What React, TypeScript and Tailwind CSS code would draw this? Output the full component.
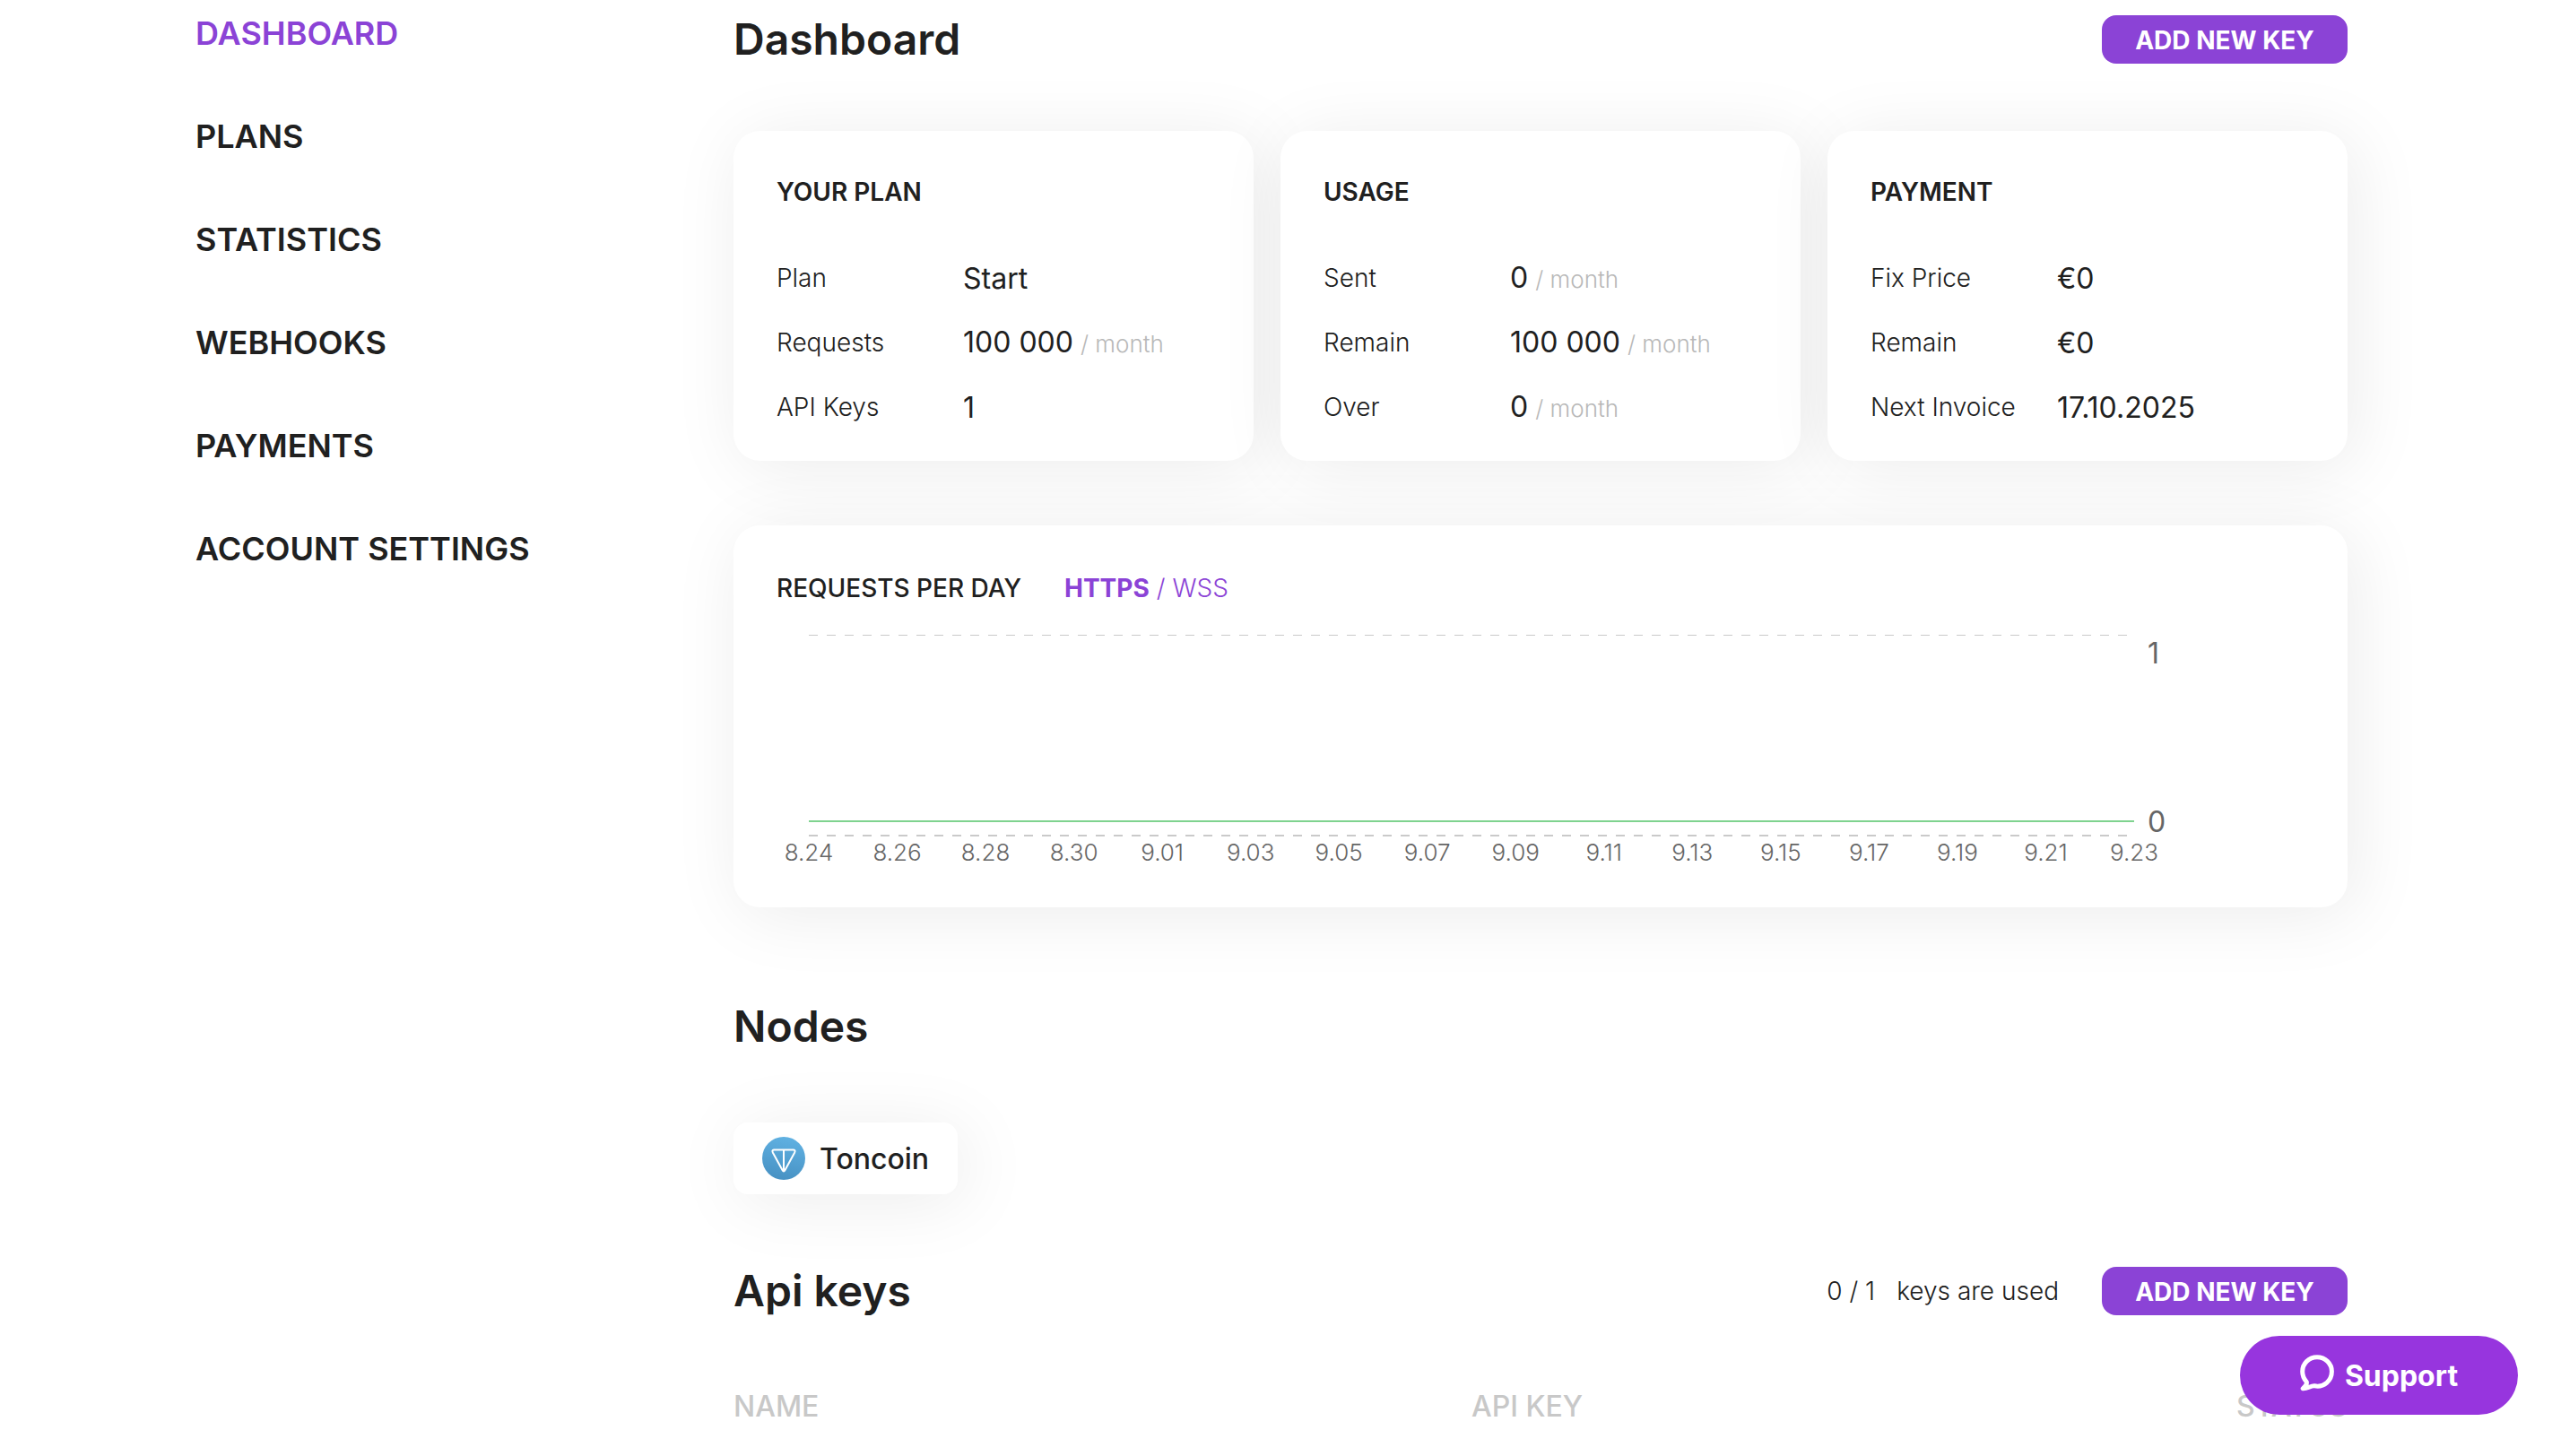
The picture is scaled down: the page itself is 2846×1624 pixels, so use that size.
import React from "react";

const navItems = ["DASHBOARD", "PLANS", "STATISTICS", "WEBHOOKS", "PAYMENTS", "ACCOUNT SETTINGS"];

type Row = { label: string; value: string; unit?: string };

const cards: { title: string; rows: Row[] }[] = [
  {
    title: "YOUR PLAN",
    rows: [
      { label: "Plan", value: "Start" },
      { label: "Requests", value: "100 000", unit: "/ month" },
      { label: "API Keys", value: "1" },
    ],
  },
  {
    title: "USAGE",
    rows: [
      { label: "Sent", value: "0", unit: "/ month" },
      { label: "Remain", value: "100 000", unit: "/ month" },
      { label: "Over", value: "0", unit: "/ month" },
    ],
  },
  {
    title: "PAYMENT",
    rows: [
      { label: "Fix Price", value: "€0" },
      { label: "Remain", value: "€0" },
      { label: "Next Invoice", value: "17.10.2025" },
    ],
  },
];

const days = [
  "8.24", "8.26", "8.28", "8.30", "9.01", "9.03", "9.05", "9.07",
  "9.09", "9.11", "9.13", "9.15", "9.17", "9.19", "9.21", "9.23",
];

const PLOT_LEFT = 84;
const PLOT_RIGHT = 1562;

function AddKeyButton() {
  return (
    <button
      type="button"
      className="h-[54px] w-[274px] shrink-0 rounded-2xl bg-[#8b43d6] pt-0.5 text-[28px] leading-[40px] font-bold text-white"
    >
      ADD NEW KEY
    </button>
  );
}

function InfoCard({ title, rows }: { title: string; rows: Row[] }) {
  return (
    <section className="rounded-[30px] bg-white px-12 pt-12 pb-6 shadow-[8px_8px_80px_rgba(0,0,0,0.08)]">
      <h2 className="text-[28px] leading-[40px] font-semibold">{title}</h2>
      <dl className="mt-10">
        {rows.map((row) => (
          <div key={row.label} className="flex h-[72px] items-center">
            <dt className="w-[208px] shrink-0 text-[28px] leading-[40px] font-light">{row.label}</dt>
            <dd className="flex items-baseline gap-2 pt-0.5 text-[32px] leading-[40px] whitespace-nowrap">
              {row.value}
              {row.unit && <span className="text-[26px] font-light text-[#b8b8b8]">{row.unit}</span>}
            </dd>
          </div>
        ))}
      </dl>
    </section>
  );
}

function RequestsChart() {
  const step = (PLOT_RIGHT - PLOT_LEFT) / (days.length - 1);
  return (
    <svg viewBox="0 0 1800 336" className="block w-full" role="img" aria-label="Requests per day">
      <line x1={PLOT_LEFT} x2={PLOT_RIGHT} y1="32.5" y2="32.5" stroke="#cacaca" strokeWidth="1" strokeDasharray="10 10" />
      <line x1={PLOT_LEFT} x2={PLOT_RIGHT} y1="256" y2="256" stroke="#cacaca" strokeWidth="2" strokeDasharray="10 10" />
      <line x1={PLOT_LEFT} x2={PLOT_RIGHT} y1="240" y2="240" stroke="#7fd38f" strokeWidth="2" />
      <g fill="#666666" fontSize="32">
        <text x="1577" y="64">1</text>
        <text x="1577" y="252">0</text>
      </g>
      <g fill="#666666" fontSize="26" fontWeight="300" textAnchor="middle">
        {days.map((day, i) => (
          <text key={day} x={PLOT_LEFT + i * step} y="284">
            {day}
          </text>
        ))}
      </g>
    </svg>
  );
}

function ToncoinIcon() {
  return (
    <svg viewBox="0 0 48 48" className="size-12" aria-hidden="true">
      <defs>
        <linearGradient id="ton" x1="0.6" y1="0" x2="0.4" y2="1">
          <stop offset="0" stopColor="#60b1e2" />
          <stop offset="1" stopColor="#4791c3" />
        </linearGradient>
      </defs>
      <circle cx="24" cy="24" r="24" fill="url(#ton)" />
      <path
        d="M13 14.5H35Q37.4 14.8 36.2 17.4L25.4 37.2Q24 39.6 22.6 37.2L11.8 17.4Q10.6 14.8 13 14.5ZM24 14.5V38"
        fill="none"
        stroke="#fff"
        strokeWidth="2"
        strokeLinejoin="round"
      />
    </svg>
  );
}

function ChatIcon() {
  return (
    <svg viewBox="0 0 38 41" className="h-[41px] w-[38px]" aria-hidden="true">
      <path
        d="M19 2.7C10 2.7 2.7 9.8 2.7 18.8C2.7 23.6 4.6 27.4 7.3 30.4C7.9 33.5 5.6 36 3.2 37.8C8 38.4 12 34.3 16.2 34.8C26.8 36.8 35.4 28.8 35.4 18.8C35.4 9.8 28 2.7 19 2.7Z"
        fill="none"
        stroke="#fff"
        strokeWidth="5"
        strokeLinejoin="round"
      />
    </svg>
  );
}

export default function App() {
  return (
    <div className="min-h-screen bg-white pr-[10px] font-['Inter',sans-serif] text-[#202020]">
      <div className="mx-auto flex max-w-[2400px]">
        <nav className="w-1/4 shrink-0 pt-[15px]">
          <ul className="flex flex-col gap-[70px] text-[36px] leading-[45px] font-semibold">
            {navItems.map((item, i) => (
              <li key={item}>
                <a href="#" className={i === 0 ? "text-[#8b43d6]" : ""}>
                  {item}
                </a>
              </li>
            ))}
          </ul>
        </nav>

        <main className="min-w-0 flex-1 pt-[17px] pb-6">
          <header className="flex items-center justify-between">
            <h1 className="text-[48px] leading-[54px] font-semibold">Dashboard</h1>
            <AddKeyButton />
          </header>

          <div className="mt-[75px] grid grid-cols-3 gap-[30px]">
            {cards.map((card) => (
              <InfoCard key={card.title} {...card} />
            ))}
          </div>

          <section className="mt-[72px] rounded-[30px] bg-white pt-[50px] shadow-[8px_8px_80px_rgba(0,0,0,0.08)]">
            <div className="flex gap-12 px-12 text-[28px] leading-[40px]">
              <h2 className="font-medium">REQUESTS PER DAY</h2>
              <div className="flex gap-2 font-light text-[#8b43d6]">
                <button type="button" className="font-bold">HTTPS</button>
                <span>/</span>
                <button type="button">WSS</button>
              </div>
            </div>
            <RequestsChart />
          </section>

          <h2 className="mt-[103px] text-[48px] leading-[60px] font-semibold">Nodes</h2>
          <button
            type="button"
            className="mt-[77px] flex h-20 items-center gap-4 rounded-2xl bg-white px-8 text-[32px] leading-[40px] font-medium shadow-[8px_8px_80px_rgba(0,0,0,0.08)]"
          >
            <ToncoinIcon />
            <span className="pt-0.5">Toncoin</span>
          </button>

          <div className="mt-[81px] flex items-center justify-between">
            <h2 className="text-[48px] leading-[54px] font-semibold">Api keys</h2>
            <div className="flex items-center gap-12">
              <p className="flex gap-6 text-[28px] leading-[40px] font-light">
                <span>0 / 1</span>
                <span>keys are used</span>
              </p>
              <AddKeyButton />
            </div>
          </div>

          <table className="mt-20 w-full table-fixed text-[32px] leading-[44px] text-[#c8c8c8]">
            <thead>
              <tr>
                <th scope="col" className="w-[823px] text-left font-medium">NAME</th>
                <th scope="col" className="text-left font-medium">API KEY</th>
                <th scope="col" className="text-right font-medium">STATUS</th>
              </tr>
            </thead>
          </table>
        </main>
      </div>

      <button
        type="button"
        className="fixed right-[38px] bottom-[46px] flex h-[88px] w-[310px] items-center justify-center gap-3 rounded-full bg-[#9735de] text-[32px] leading-[40px] font-bold text-white"
      >
        <span className="pb-1.5">
          <ChatIcon />
        </span>
        <span className="pt-0.5">Support</span>
      </button>
    </div>
  );
}
